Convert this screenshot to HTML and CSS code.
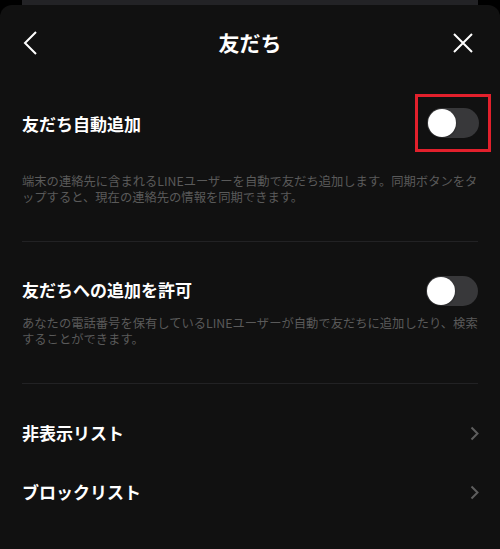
FILE: index.html
```html
<!DOCTYPE html>
<html lang="ja">
<head>
<meta charset="utf-8">
<link rel="stylesheet" href="styles.css">
</head>
<body>
<div class="backcard"></div>
<div class="sheet">
  <header class="header">
    <div class="hbtn left">
      <svg width="16" height="24" viewBox="0 0 16 24"><polyline points="13,1 2,12 13,23" fill="none" stroke="#fff" stroke-width="2"/></svg>
    </div>
    <h1 class="title">友だち</h1>
    <div class="hbtn right">
      <svg width="22" height="22" viewBox="0 0 22 22"><path d="M2 2 L20 20 M20 2 L2 20" fill="none" stroke="#fff" stroke-width="2"/></svg>
    </div>
  </header>

  <section class="setting first">
    <div class="row">
      <span class="label">友だち自動追加</span>
      <div class="highlight">
        <div class="toggle"><div class="knob"></div></div>
      </div>
    </div>
    <p class="desc desc-first">端末の連絡先に含まれるLINEユーザーを自動で友だち追加します。同期ボタンをタップすると、現在の連絡先の情報を同期できます。</p>
  </section>

  <div class="divider"></div>

  <section class="setting second">
    <div class="row">
      <span class="label">友だちへの追加を許可</span>
      <div class="toggle"><div class="knob"></div></div>
    </div>
    <p class="desc desc-second">あなたの電話番号を保有しているLINEユーザーが自動で友だちに追加したり、検索することができます。</p>
  </section>

  <div class="divider"></div>

  <nav class="list">
    <div class="list-item">
      <span class="label">非表示リスト</span>
      <svg class="chev" width="9" height="15" viewBox="0 0 9 15"><polyline points="1.5,1.5 7.5,7.5 1.5,13.5" fill="none" stroke="#5e5e5e" stroke-width="2"/></svg>
    </div>
    <div class="list-item">
      <span class="label">ブロックリスト</span>
      <svg class="chev" width="9" height="15" viewBox="0 0 9 15"><polyline points="1.5,1.5 7.5,7.5 1.5,13.5" fill="none" stroke="#5e5e5e" stroke-width="2"/></svg>
    </div>
  </nav>
</div>
</body>
</html>
```
FILE: styles.css
```css
html, body {
  margin: 0;
  padding: 0;
  background: #000;
  height: 100%;
  overflow: hidden;
}
body {
  font-family: "Noto Sans CJK JP", "Noto Sans", sans-serif;
  color: #fff;
}
.backcard {
  margin: 0 22px;
  height: 5px;
  background: #232326;
}
.sheet {
  background: #111111;
  border-radius: 12px 12px 0 0;
  padding: 0 22px;
  height: 544px;
  overflow: hidden;
}
.header {
  height: 75px;
  display: grid;
  grid-template-columns: 50px 1fr 50px;
  align-items: center;
}
.hbtn {
  display: flex;
}
.hbtn svg {
  display: block;
}
.hbtn.left {
  justify-content: flex-start;
  padding-left: 1px;
}
.hbtn.right {
  justify-content: flex-end;
  padding-right: 4px;
}
.title {
  margin: 0;
  text-align: center;
  font-size: 21px;
  font-weight: 700;
  line-height: 1;
}
.row {
  display: flex;
  align-items: center;
  justify-content: space-between;
}
.label {
  font-size: 17px;
  font-weight: 700;
  line-height: 1;
  color: #fff;
}
.first {
  padding-top: 14px;
}
.highlight {
  border: 3px solid #e2202c;
  padding: 11px 9px;
  margin-right: -13px;
}
.toggle {
  width: 52px;
  height: 30px;
  border-radius: 15px;
  background: #38383a;
  position: relative;
  flex: none;
}
.knob {
  position: absolute;
  left: 1px;
  top: 1px;
  width: 28px;
  height: 28px;
  border-radius: 50%;
  background: #fff;
  box-shadow: 0 1px 2px rgba(0,0,0,0.4);
}
.desc {
  margin: 0;
  font-size: 12.3px;
  line-height: 16px;
  color: #5a5a5a;
}
.desc-first {
  margin-top: 21px;
  padding-bottom: 36px;
}
.divider {
  height: 1px;
  background: #222224;
}
.second {
  padding-top: 34px;
}
.second .label {
  padding-bottom: 4px;
}
.desc-second {
  margin-top: 9px;
  padding-bottom: 36px;
}
.list {
  padding-top: 20px;
}
.list-item {
  height: 59px;
  display: flex;
  align-items: center;
  justify-content: space-between;
}
.list-item .label {
  padding-bottom: 2px;
}
.chev {
  display: block;
  margin-right: -1px;
}
```
